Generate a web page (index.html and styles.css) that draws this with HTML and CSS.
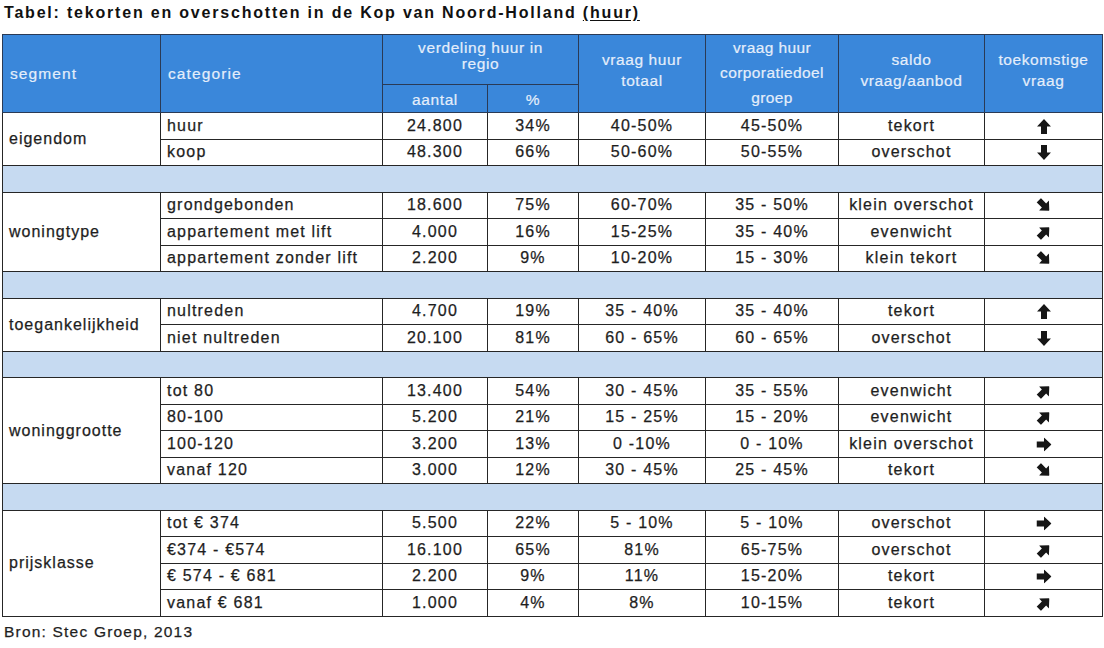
FILE: index.html
```html
<!DOCTYPE html>
<html lang="nl">
<head>
<meta charset="utf-8">
<title>Tabel huur</title>
<link rel="stylesheet" href="styles.css">
</head>
<body>
<svg width="0" height="0" class="defs">
  <defs>
    <path id="arr" d="M6.5 0 L13 7 L9.3 7 L9.3 14 L3.7 14 L3.7 7 L0 7 Z"/>
  </defs>
</svg>
<div class="page">
  <h1 class="title">Tabel: tekorten en overschotten in de Kop van Noord-Holland <u>(huur)</u></h1>
  <table class="tbl">
    <colgroup>
      <col class="c-seg"><col class="c-cat"><col class="c-aan"><col class="c-pct"><col class="c-tot"><col class="c-cor"><col class="c-sal"><col class="c-toe">
    </colgroup>
    <thead>
      <tr class="h1">
        <th rowspan="2" class="left">segment</th>
        <th rowspan="2" class="left">categorie</th>
        <th colspan="2" class="top">verdeling huur in<br>regio</th>
        <th rowspan="2" class="two">vraag huur<br>totaal</th>
        <th rowspan="2" class="corp">vraag huur<br>corporatiedoel<br>groep</th>
        <th rowspan="2" class="two">saldo<br>vraag/aanbod</th>
        <th rowspan="2" class="two">toekomstige<br>vraag</th>
      </tr>
      <tr class="h2">
        <th>aantal</th>
        <th>%</th>
      </tr>
    </thead>
    <tbody>
      <tr><td rowspan="2" class="seg">eigendom</td><td class="cat">huur</td><td>24.800</td><td>34%</td><td>40-50%</td><td>45-50%</td><td>tekort</td><td><svg class="ar up" viewBox="0 0 13 14"><use href="#arr"/></svg></td></tr>
      <tr><td class="cat">koop</td><td>48.300</td><td>66%</td><td>50-60%</td><td>50-55%</td><td>overschot</td><td><svg class="ar down" viewBox="0 0 13 14"><use href="#arr"/></svg></td></tr>
      <tr class="sep"><td colspan="8"></td></tr>
      <tr><td rowspan="3" class="seg">woningtype</td><td class="cat">grondgebonden</td><td>18.600</td><td>75%</td><td>60-70%</td><td>35 - 50%</td><td>klein overschot</td><td><svg class="ar se" viewBox="0 0 13 14"><use href="#arr"/></svg></td></tr>
      <tr><td class="cat">appartement met lift</td><td>4.000</td><td>16%</td><td>15-25%</td><td>35 - 40%</td><td>evenwicht</td><td><svg class="ar ne" viewBox="0 0 13 14"><use href="#arr"/></svg></td></tr>
      <tr><td class="cat">appartement zonder lift</td><td>2.200</td><td>9%</td><td>10-20%</td><td>15 - 30%</td><td>klein tekort</td><td><svg class="ar se" viewBox="0 0 13 14"><use href="#arr"/></svg></td></tr>
      <tr class="sep"><td colspan="8"></td></tr>
      <tr><td rowspan="2" class="seg">toegankelijkheid</td><td class="cat">nultreden</td><td>4.700</td><td>19%</td><td>35 - 40%</td><td>35 - 40%</td><td>tekort</td><td><svg class="ar up" viewBox="0 0 13 14"><use href="#arr"/></svg></td></tr>
      <tr><td class="cat">niet nultreden</td><td>20.100</td><td>81%</td><td>60 - 65%</td><td>60 - 65%</td><td>overschot</td><td><svg class="ar down" viewBox="0 0 13 14"><use href="#arr"/></svg></td></tr>
      <tr class="sep"><td colspan="8"></td></tr>
      <tr><td rowspan="4" class="seg">woninggrootte</td><td class="cat">tot 80</td><td>13.400</td><td>54%</td><td>30 - 45%</td><td>35 - 55%</td><td>evenwicht</td><td><svg class="ar ne" viewBox="0 0 13 14"><use href="#arr"/></svg></td></tr>
      <tr><td class="cat">80-100</td><td>5.200</td><td>21%</td><td>15 - 25%</td><td>15 - 20%</td><td>evenwicht</td><td><svg class="ar ne" viewBox="0 0 13 14"><use href="#arr"/></svg></td></tr>
      <tr><td class="cat">100-120</td><td>3.200</td><td>13%</td><td>0 -10%</td><td>0 - 10%</td><td>klein overschot</td><td><svg class="ar right" viewBox="0 0 13 14"><use href="#arr"/></svg></td></tr>
      <tr><td class="cat">vanaf 120</td><td>3.000</td><td>12%</td><td>30 - 45%</td><td>25 - 45%</td><td>tekort</td><td><svg class="ar se" viewBox="0 0 13 14"><use href="#arr"/></svg></td></tr>
      <tr class="sep"><td colspan="8"></td></tr>
      <tr><td rowspan="4" class="seg">prijsklasse</td><td class="cat">tot € 374</td><td>5.500</td><td>22%</td><td>5 - 10%</td><td>5 - 10%</td><td>overschot</td><td><svg class="ar right" viewBox="0 0 13 14"><use href="#arr"/></svg></td></tr>
      <tr><td class="cat">€374 - €574</td><td>16.100</td><td>65%</td><td>81%</td><td>65-75%</td><td>overschot</td><td><svg class="ar ne" viewBox="0 0 13 14"><use href="#arr"/></svg></td></tr>
      <tr><td class="cat">€ 574 - € 681</td><td>2.200</td><td>9%</td><td>11%</td><td>15-20%</td><td>tekort</td><td><svg class="ar right" viewBox="0 0 13 14"><use href="#arr"/></svg></td></tr>
      <tr><td class="cat">vanaf € 681</td><td>1.000</td><td>4%</td><td>8%</td><td>10-15%</td><td>tekort</td><td><svg class="ar ne" viewBox="0 0 13 14"><use href="#arr"/></svg></td></tr>
    </tbody>
  </table>
  <p class="source">Bron: Stec Groep, 2013</p>
</div>
</body>
</html>
```

FILE: styles.css
```css
html, body {
  margin: 0;
  padding: 0;
  background: #ffffff;
}
.defs {
  position: absolute;
  width: 0;
  height: 0;
}
.page {
  padding: 4px 2px 0 2px;
  font-family: "Liberation Sans", Arial, sans-serif;
  color: #1e1e1e;
}
.title {
  margin: 0 0 0 2px;
  font-size: 16px;
  font-weight: bold;
  letter-spacing: 1.8px;
  line-height: 17px;
  color: #111;
}
.title u {
  text-underline-offset: 2px;
}
.tbl {
  margin-top: 13px;
  width: 1100px;
  border-collapse: collapse;
  table-layout: fixed;
  font-size: 16px;
  letter-spacing: 1.2px;
  -webkit-text-stroke: 0.25px #1e1e1e;
}
.c-seg { width: 158px; }
.c-cat { width: 222px; }
.c-aan { width: 105px; }
.c-pct { width: 91px; }
.c-tot { width: 127px; }
.c-cor { width: 133px; }
.c-sal { width: 146px; }
.c-toe { width: 118px; }

.tbl th {
  background: #3a87da;
  color: #e4eefb;
  -webkit-text-stroke: 0.2px #e4eefb;
  font-weight: normal;
  font-size: 15.5px;
  letter-spacing: 0.6px;
  line-height: 16px;
  border: 1px solid #2a3a55;
  padding: 0 2px;
  text-align: center;
  vertical-align: middle;
  white-space: nowrap;
}
.tbl th.left {
  text-align: left;
  padding-left: 7px;
  letter-spacing: 1.1px;
}
.tbl th.two {
  line-height: 21px;
  padding-bottom: 7px;
}
.tbl th.corp {
  line-height: 25px;
  padding-bottom: 2px;
  letter-spacing: 0.4px;
}
.tbl th.top {
  padding-bottom: 8px;
}
.tbl tr.h1 { height: 50px; }
.tbl tr.h2 { height: 28px; }
.tbl tr.h2 th { padding-top: 2px; }

.tbl td {
  border: 1px solid #262626;
  height: 25.5px;
  padding: 0 2px;
  text-align: center;
  vertical-align: middle;
  line-height: 16px;
  white-space: nowrap;
}
.tbl td.seg {
  text-align: left;
  padding-left: 6px;
  letter-spacing: 1px;
}
.tbl td.cat {
  text-align: left;
  padding-left: 6px;
}
.tbl tr.sep td {
  background: #c6daf1;
  height: 25.5px;
  padding: 0;
}
.ar {
  display: inline-block;
  width: 14px;
  height: 15px;
  fill: #161616;
  vertical-align: middle;
}
.ar.up { transform: rotate(0deg); }
.ar.down { transform: rotate(180deg); }
.ar.right { transform: rotate(90deg); }
.ar.ne { transform: rotate(45deg); }
.ar.se { transform: rotate(135deg); }

.source {
  margin: 6px 0 0 2px;
  font-size: 15.5px;
  letter-spacing: 1.2px;
  line-height: 17px;
  color: #1e1e1e;
  -webkit-text-stroke: 0.25px #1e1e1e;
}
```
